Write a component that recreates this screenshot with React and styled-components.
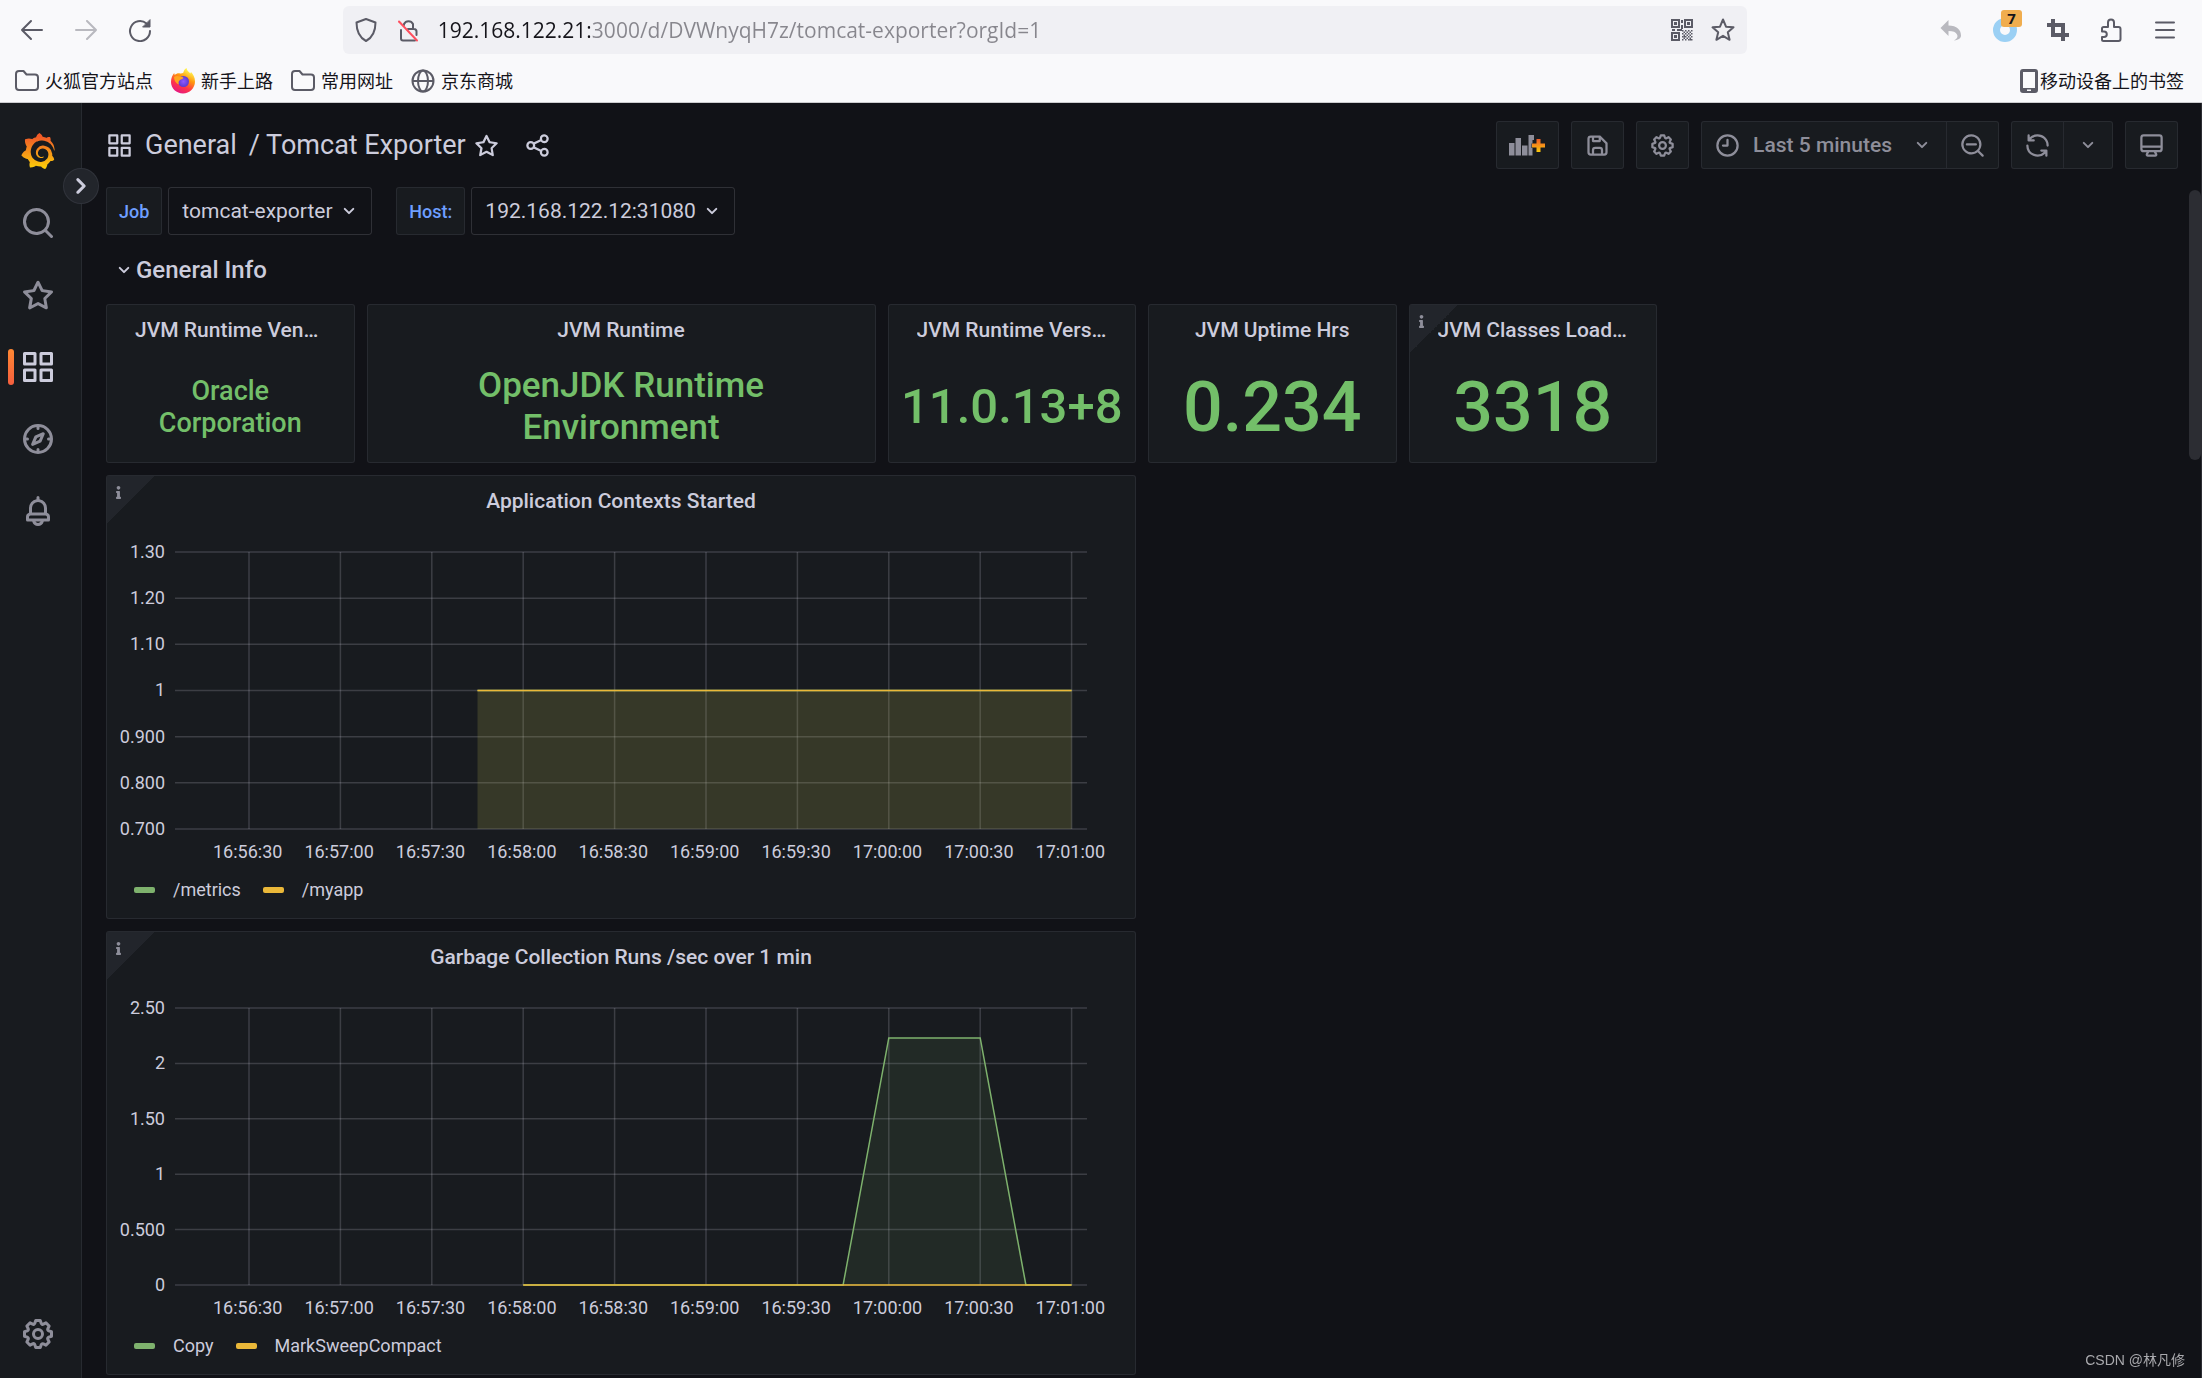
/**
 * Pages - Tomcat Exporter dashboard
 */

// React
import React from 'react'

// UI
import { SiGrafana } from 'react-icons/si'
import { FaInfo } from 'react-icons/fa'

// Style
import styled, { createGlobalStyle, css, ThemeProvider } from 'styled-components'

const theme = {
  COLOUR: {
    axis: 'rgba(204, 204, 220, 0.2)',
    blue: '#6e9fff',
    border: 'rgba(204, 204, 220, 0.09)',
    canvas: '#111217',
    chrome: '#f9f9fb',
    chromeIcon: '#5b5b66',
    green: '#73bf69',
    muted: '#8e8e9a',
    panel: '#181b1f',
    raised: '#22252b',
    seriesGreen: '#7eb26d',
    seriesYellow: '#eab839',
    text: '#ccccdc'
  },
  FONT: {
    app: "Roboto, 'Liberation Sans', sans-serif",
    chrome: "'Open Sans', 'Noto Sans CJK SC', sans-serif"
  }
}

const ICONS = {
  angleDown:
    'M17,9.17a1,1,0,0,0-1.41,0L12,12.71,8.46,9.17a1,1,0,0,0-1.41,0,1,1,0,0,0,0,1.42l4.24,4.24a1,1,0,0,0,1.42,0L17,10.59A1,1,0,0,0,17,9.17Z',
  angleRight:
    'M14.83,11.29,10.59,7.05a1,1,0,0,0-1.42,0,1,1,0,0,0,0,1.41L12.71,12,9.17,15.54a1,1,0,0,0,0,1.41,1,1,0,0,0,.71.29,1,1,0,0,0,.71-.29l4.24-4.24A1,1,0,0,0,14.83,11.29Z',
  apps:
    'M10,13H3a1,1,0,0,0-1,1v7a1,1,0,0,0,1,1h7a1,1,0,0,0,1-1V14A1,1,0,0,0,10,13ZM9,20H4V15H9ZM21,2H14a1,1,0,0,0-1,1v7a1,1,0,0,0,1,1h7a1,1,0,0,0,1-1V3A1,1,0,0,0,21,2ZM20,9H15V4h5Zm1,4H14a1,1,0,0,0-1,1v7a1,1,0,0,0,1,1h7a1,1,0,0,0,1-1V14A1,1,0,0,0,21,13Zm-1,7H15V15h5ZM10,2H3A1,1,0,0,0,2,3v7a1,1,0,0,0,1,1h7a1,1,0,0,0,1-1V3A1,1,0,0,0,10,2ZM9,9H4V4H9Z',
  bell:
    'M18,13.18V10a6,6,0,0,0-5-5.91V3a1,1,0,0,0-2,0V4.09A6,6,0,0,0,6,10v3.18A3,3,0,0,0,4,16v2a1,1,0,0,0,1,1H8.14a4,4,0,0,0,7.72,0H19a1,1,0,0,0,1-1V16A3,3,0,0,0,18,13.18ZM8,10a4,4,0,0,1,8,0v3H8Zm4,10a2,2,0,0,1-1.72-1h3.44A2,2,0,0,1,12,20Zm6-3H6V16a1,1,0,0,1,1-1H17a1,1,0,0,1,1,1Z',
  clock:
    'M12,2A10,10,0,1,0,22,12,10,10,0,0,0,12,2Zm0,18a8,8,0,1,1,8-8A8,8,0,0,1,12,20ZM12,6a1,1,0,0,0-1,1v4H8a1,1,0,0,0,0,2h4a1,1,0,0,0,1-1V7A1,1,0,0,0,12,6Z',
  cog:
    'M21.32,9.55l-1.89-.63.89-1.78A1,1,0,0,0,20.13,6L18,3.87a1,1,0,0,0-1.15-.19l-1.78.89-.63-1.89A1,1,0,0,0,13.5,2h-3a1,1,0,0,0-.95.68L8.92,4.57,7.14,3.68A1,1,0,0,0,6,3.87L3.87,6a1,1,0,0,0-.19,1.15l.89,1.78-1.89.63A1,1,0,0,0,2,10.5v3a1,1,0,0,0,.68.95l1.89.63-.89,1.78A1,1,0,0,0,3.87,18L6,20.13a1,1,0,0,0,1.15.19l1.78-.89.63,1.89a1,1,0,0,0,.95.68h3a1,1,0,0,0,.95-.68l.63-1.89,1.78.89A1,1,0,0,0,18,20.13L20.13,18a1,1,0,0,0,.19-1.15l-.89-1.78,1.89-.63A1,1,0,0,0,22,13.5v-3A1,1,0,0,0,21.32,9.55ZM20,12.78l-1.2.4A2,2,0,0,0,17.64,16l.57,1.14-1.1,1.1L16,17.64a2,2,0,0,0-2.79,1.16l-.4,1.2H11.22l-.4-1.2A2,2,0,0,0,8,17.64l-1.14.57-1.1-1.1L6.36,16A2,2,0,0,0,5.2,13.18L4,12.78V11.22l1.2-.4A2,2,0,0,0,6.36,8L5.79,6.89l1.1-1.1L8,6.36A2,2,0,0,0,10.82,5.2l.4-1.2h1.56l.4,1.2A2,2,0,0,0,16,6.36l1.14-.57,1.1,1.1L17.64,8a2,2,0,0,0,1.16,2.79l1.2.4ZM12,8a4,4,0,1,0,4,4A4,4,0,0,0,12,8Zm0,6a2,2,0,1,1,2-2A2,2,0,0,1,12,14Z',
  compass:
    'M12,2A10,10,0,1,0,22,12,10,10,0,0,0,12,2Zm1,17.93V19a1,1,0,0,0-2,0v.93A8,8,0,0,1,4.07,13H5a1,1,0,0,0,0-2H4.07A8,8,0,0,1,11,4.07V5a1,1,0,0,0,2,0V4.07A8,8,0,0,1,19.93,11H19a1,1,0,0,0,0,2h.93A8,8,0,0,1,13,19.93ZM15.14,7.55l-5,2.12a1,1,0,0,0-.52.52l-2.12,5a1,1,0,0,0,.21,1.1,1,1,0,0,0,.7.3.93.93,0,0,0,.4-.09l5-2.12a1,1,0,0,0,.52-.52l2.12-5a1,1,0,0,0-1.31-1.31Zm-2.49,5.1-2.28,1,1-2.28,2.28-1Z',
  monitor:
    'M19,2H5A3,3,0,0,0,2,5V15a3,3,0,0,0,3,3H7.64l-.58,1a2,2,0,0,0,0,2,2,2,0,0,0,1.75,1h6.46A2,2,0,0,0,17,21a2,2,0,0,0,0-2l-.59-1H19a3,3,0,0,0,3-3V5A3,3,0,0,0,19,2ZM8.77,20,10,18H14l1.2,2ZM20,15a1,1,0,0,1-1,1H5a1,1,0,0,1-1-1V14H20Zm0-3H4V5A1,1,0,0,1,5,4H19a1,1,0,0,1,1,1Z',
  save:
    'M20.71,9.29l-6-6a1,1,0,0,0-.32-.21A1.09,1.09,0,0,0,14,3H6A3,3,0,0,0,3,6V18a3,3,0,0,0,3,3H18a3,3,0,0,0,3-3V10A1,1,0,0,0,20.71,9.29ZM9,5h4V7H9Zm6,14H9V16a1,1,0,0,1,1-1h4a1,1,0,0,1,1,1Zm4-1a1,1,0,0,1-1,1H17V16a3,3,0,0,0-3-3H10a3,3,0,0,0-3,3v3H6a1,1,0,0,1-1-1V6A1,1,0,0,1,6,5H7V8A1,1,0,0,0,8,9h6a1,1,0,0,0,1-1V6.41l4,4Z',
  search:
    'M21.71,20.29,18,16.61A9,9,0,1,0,16.61,18l3.68,3.68a1,1,0,0,0,1.42,0A1,1,0,0,0,21.71,20.29ZM11,18a7,7,0,1,1,7-7A7,7,0,0,1,11,18Z',
  searchMinus:
    'M21.71,20.29,18,16.61A9,9,0,1,0,16.61,18l3.68,3.68a1,1,0,0,0,1.42,0A1,1,0,0,0,21.71,20.29ZM11,18a7,7,0,1,1,7-7A7,7,0,0,1,11,18Zm4-8H7a1,1,0,0,0,0,2h8a1,1,0,0,0,0-2Z',
  share:
    'M18,14a4,4,0,0,0-3.08,1.48l-5.1-2.35a3.64,3.64,0,0,0,0-2.26l5.1-2.35A4,4,0,1,0,14,6a4.17,4.17,0,0,0,.07.71L8.79,9.14a4,4,0,1,0,0,5.72l5.28,2.43A4.17,4.17,0,0,0,14,18a4,4,0,1,0,4-4ZM18,4a2,2,0,1,1-2,2A2,2,0,0,1,18,4ZM6,14a2,2,0,1,1,2-2A2,2,0,0,1,6,14Zm12,6a2,2,0,1,1,2-2A2,2,0,0,1,18,20Z',
  star:
    'M22,9.67A1,1,0,0,0,21.14,9l-5.69-.83L12.9,3a1,1,0,0,0-1.8,0L8.55,8.16,2.86,9a1,1,0,0,0-.81.68,1,1,0,0,0,.25,1l4.13,4-1,5.68A1,1,0,0,0,6.9,21.44L12,18.77l5.1,2.67a.93.93,0,0,0,.46.12,1,1,0,0,0,.59-.19,1,1,0,0,0,.4-1l-1-5.68,4.13-4A1,1,0,0,0,22,9.67Zm-6.15,4a1,1,0,0,0-.29.88l.72,4.2-3.76-2a1.06,1.06,0,0,0-.94,0l-3.76,2,.72-4.2a1,1,0,0,0-.29-.88l-3-3,4.21-.61a1,1,0,0,0,.76-.55L12,5.7l1.88,3.82a1,1,0,0,0,.76.55l4.21.61Z',
  sync:
    'M19.91,15.51H15.38a1,1,0,0,0,0,2h2.4A8,8,0,0,1,4,12a1,1,0,1,0-2,0,10,10,0,0,0,16.88,7.23V21a1,1,0,0,0,2,0V16.5A1,1,0,0,0,19.91,15.51ZM12,2A10,10,0,0,0,5.12,4.77V3a1,1,0,0,0-2,0V7.5a1,1,0,0,0,1,1h4.5a1,1,0,0,0,0-2H6.22A8,8,0,0,1,20,12a1,1,0,0,0,2,0A10,10,0,0,0,12,2Z'
}

const Icon = ({ name, size = 27 }) => (
  <svg width={size} height={size} viewBox='0 0 24 24' fill='currentColor' aria-hidden='true'>
    <path d={ICONS[name]} />
  </svg>
)

// Outline icons of the browser bars, drawn on a 24px grid
const Line = ({ children, size = 24, width = 2 }) => (
  <svg
    width={size}
    height={size}
    viewBox='0 0 24 24'
    fill='none'
    stroke='currentColor'
    strokeWidth={width}
    strokeLinecap='round'
    strokeLinejoin='round'
    aria-hidden='true'
  >
    {children}
  </svg>
)

const FolderIcon = () => (
  <Line>
    <path d='M1 5a3 3 0 0 1 3-3h4.500l3 3.500H20a3 3 0 0 1 3 3V18a3 3 0 0 1-3 3H4a3 3 0 0 1-3-3Z' />
  </Line>
)

const GlobeIcon = () => (
  <Line>
    <circle cx='12' cy='12' r='10.500' />
    <ellipse cx='12' cy='12' rx='5' ry='10.500' />
    <path d='M2 12h20' />
  </Line>
)

const FirefoxIcon = () => (
  <svg width='24' height='26' viewBox='0 0 24 26' aria-hidden='true'>
    <defs>
      <linearGradient id='ff-body' x1='0.8' y1='0' x2='0.3' y2='1'>
        <stop offset='0.1' stopColor='#fff44f' />
        <stop offset='0.4' stopColor='#ff980e' />
        <stop offset='0.7' stopColor='#ff3647' />
        <stop offset='1' stopColor='#e31587' />
      </linearGradient>
      <radialGradient id='ff-core'>
        <stop offset='0' stopColor='#9059ff' />
        <stop offset='1' stopColor='#5b3ad0' />
      </radialGradient>
    </defs>
    <path
      d='M15.500 0c.5 3 2.500 3.800 3.800 5.500l.7-1.500C22 6 24 9.500 24 13.500 24 20 18.500 25.500 12 25.500S0 20.500 0 14c0-4 1.500-7 3.200-9l.5 2C5 5.500 7 5 8.500 5.200 10 6 13 5 12.500 4 12.800 2.500 14 1 15.500 0Z'
      fill='url(#ff-body)'
    />
    <circle cx='12.500' cy='13.500' r='5.500' fill='url(#ff-core)' />
    <path d='M3 9c2-1.500 4-1.200 5.500-.5 2 .2 3.500.5 4 1.500-1 1.500-3 1-4 2.500-1 1-1.200 2.500-.5 4C5 15.500 3 12.500 3 9Z' fill='#ffa51e' />
  </svg>
)

const ShieldIcon = () => (
  <Line>
    <path d='M12 1 21.500 4.500c0 8-2 14.500-9.500 18.500C4.500 19 2.500 12.500 2.500 4.500Z' />
  </Line>
)

const InsecureIcon = () => (
  <Line>
    <path d='M8 7V6a5 5 0 0 1 9 0v4.500M5 12v8.500a2 2 0 0 0 2 2h12M12 11h6a2.500 2.500 0 0 1 2.500 2.500V17' />
    <path d='M3 3.500 21 22.500' stroke='#ff4f5e' />
  </Line>
)

const QR_ROWS = ['1010101', '0101010', '1010101', '0101010', '1110101', '0101010', '1010111']

const QrIcon = () => (
  <svg width='22' height='22' viewBox='0 0 22 22' fill='currentColor' aria-hidden='true'>
    {[[0, 0], [13, 0], [0, 13]].map(([x, y]) => (
      <g key={`${x}-${y}`}>
        <rect x={x + 1} y={y + 1} width='7' height='7' fill='none' stroke='currentColor' strokeWidth='2' />
        <rect x={x + 3} y={y + 3} width='3' height='3' />
      </g>
    ))}
    {QR_ROWS.map((row, y) =>
      [...row].map(
        (bit, x) => bit === '1' && <rect key={`${x}-${y}`} x={11 + x * 1.5} y={11 + y * 1.5} width='1.500' height='1.500' />
      )
    )}
    <path d='M10 1h2v3h-2zM10 6h2v4h-2zM1 10h3v2H1zM6 10h5v2H6z' />
  </svg>
)

const AddPanelIcon = () => (
  <svg width='37' height='21' viewBox='0 0 37 21' aria-hidden='true'>
    <defs>
      <linearGradient id='add-plus' x1='0' y1='0' x2='0' y2='1'>
        <stop offset='0' stopColor='#f05a28' />
        <stop offset='1' stopColor='#fbca0a' />
      </linearGradient>
    </defs>
    <path
      d='M0 8h5.500v12.500H0zM6.500 3h5.500v17.500H6.500zM13 10.500h5.500v10H13zM19.500 0H25v5h-1.500v3.500h-1V13h1V20.500h-4z'
      fill='currentColor'
    />
    <path d='M27.500 4h4v4.500H36v4h-4.500V17h-4v-4.500H23v-4h4.500z' fill='url(#add-plus)' />
  </svg>
)

const GrafanaLogo = () => (
  <>
    <GradientDefs width='0' height='0' aria-hidden='true'>
      <defs>
        <linearGradient id='grafana' x1='0' y1='0' x2='0' y2='1'>
          <stop offset='0.1' stopColor='#f05a28' />
          <stop offset='0.95' stopColor='#fbca0a' />
        </linearGradient>
      </defs>
    </GradientDefs>
    <SiGrafana size={36} fill='url(#grafana)' aria-hidden='true' />
  </>
)

// Data
const NAV = [
  { icon: 'search', label: 'Search' },
  { icon: 'star', label: 'Starred' },
  { icon: 'apps', label: 'Dashboards', active: true },
  { icon: 'compass', label: 'Explore' },
  { icon: 'bell', label: 'Alerting' }
]

const STATS = [
  { title: 'JVM Runtime Vendor', value: 'Oracle Corporation', span: 3, size: 27 },
  { title: 'JVM Runtime', value: 'OpenJDK Runtime Environment', span: 6, size: 35 },
  { title: 'JVM Runtime Version', value: '11.0.13+8', span: 3, size: 49 },
  { title: 'JVM Uptime Hrs', value: '0.234', span: 3, size: 70 },
  { title: 'JVM Classes Loaded', value: '3318', span: 3, size: 70, info: true }
]

const TIMES = [
  '16:56:30',
  '16:57:00',
  '16:57:30',
  '16:58:00',
  '16:58:30',
  '16:59:00',
  '16:59:30',
  '17:00:00',
  '17:00:30',
  '17:01:00'
]

// Series points are [half-minute index, value]
const CHARTS = [
  {
    title: 'Application Contexts Started',
    ticks: ['1.30', '1.20', '1.10', '1', '0.900', '0.800', '0.700'],
    min: 0.7,
    max: 1.3,
    series: [
      { name: '/metrics', colour: 'seriesGreen', points: [[2.5, 1], [9, 1]] },
      { name: '/myapp', colour: 'seriesYellow', points: [[2.5, 1], [9, 1]] }
    ]
  },
  {
    title: 'Garbage Collection Runs /sec over 1 min',
    ticks: ['2.50', '2', '1.50', '1', '0.500', '0'],
    min: 0,
    max: 2.5,
    series: [
      { name: 'Copy', colour: 'seriesGreen', points: [[3, 0], [6.5, 0], [7, 2.23], [8, 2.23], [8.5, 0], [9, 0]] },
      { name: 'MarkSweepCompact', colour: 'seriesYellow', points: [[3, 0], [9, 0]] }
    ]
  }
]

const PLOT = { width: 912, height: 277, start: 74, step: 91.4, stroke: 1.5 }

const Plot = ({ max, min, series, ticks, title }) => {
  const x = i => PLOT.start + i * PLOT.step
  const y = v => PLOT.height - ((v - min) / (max - min)) * PLOT.height

  return (
    <StyledPlot
      viewBox={`0 0 ${PLOT.width} ${PLOT.height}`}
      preserveAspectRatio='none'
      role='img'
      aria-label={title}
    >
      <g stroke={theme.COLOUR.axis} strokeWidth={PLOT.stroke}>
        {ticks.map((tick, i) => {
          const at = (i * PLOT.height) / (ticks.length - 1)
          return <line key={tick} x1='0' x2={PLOT.width} y1={at} y2={at} />
        })}

        {TIMES.map((time, i) => (
          <line key={time} x1={x(i)} x2={x(i)} y1='0' y2={PLOT.height} />
        ))}
      </g>

      {series.map(({ colour, name, points }) => {
        const line = points.map(([i, v]) => `${x(i)},${y(v)}`)
        const base = [`${x(points[points.length - 1][0])},${PLOT.height}`, `${x(points[0][0])},${PLOT.height}`]

        return (
          <g key={name}>
            <polygon points={[...line, ...base].join(' ')} fill={theme.COLOUR[colour]} fillOpacity='0.1' />
            <polyline
              points={line.join(' ')}
              fill='none'
              stroke={theme.COLOUR[colour]}
              strokeWidth={PLOT.stroke}
            />
          </g>
        )
      })}
    </StyledPlot>
  )
}

const InfoCorner = () => (
  <CornerButton type='button' aria-label='Panel description'>
    <FaInfo size={13} />
  </CornerButton>
)

const StatPanel = ({ info, size, span, title, value }) => (
  <Panel $span={span} $rows={3}>
    {info && <InfoCorner />}
    <PanelTitle>{title}</PanelTitle>
    <StatValue $size={size}>{value}</StatValue>
  </Panel>
)

const ChartPanel = ({ chart }) => (
  <Panel $span={12} $rows={8}>
    <InfoCorner />
    <PanelTitle>{chart.title}</PanelTitle>

    <PlotRow>
      <YAxis>
        {chart.ticks.map(tick => (
          <span key={tick}>{tick}</span>
        ))}
      </YAxis>
      <Plot {...chart} />
    </PlotRow>

    <XAxis>
      {TIMES.map(time => (
        <span key={time}>{time}</span>
      ))}
    </XAxis>

    <Legend>
      {chart.series.map(({ colour, name }) => (
        <LegendItem key={name}>
          <Swatch $colour={colour} />
          {name}
        </LegendItem>
      ))}
    </Legend>
  </Panel>
)

const Variable = ({ id, label, value }) => (
  <VariableGroup>
    <VariableLabel htmlFor={id}>{label}</VariableLabel>
    <SelectWrap>
      <StyledSelect id={id} defaultValue={value}>
        <option>{value}</option>
      </StyledSelect>
      <Icon name='angleDown' size={24} />
    </SelectWrap>
  </VariableGroup>
)

const BrowserChrome = () => (
  <Chrome>
    <ChromeBar>
      <NavButtons>
        <ChromeButton type='button' aria-label='Back'>
          <Line>
            <path d='M2 12h20M11 3l-9 9 9 9' />
          </Line>
        </ChromeButton>
        <ChromeButton type='button' aria-label='Forward' $dim>
          <Line>
            <path d='M2 12h20M13 3l9 9-9 9' />
          </Line>
        </ChromeButton>
        <ChromeButton type='button' aria-label='Reload'>
          <Line>
            <path d='M22 13a10 10 0 1 1-3.500-7.500' />
            <path d='M22 2v7h-7Z' fill='currentColor' strokeWidth='1' />
          </Line>
        </ChromeButton>
      </NavButtons>

      <UrlBar>
        <ShieldIcon />
        <InsecureIcon />
        <UrlInput
          aria-label='Address'
          defaultValue='192.168.122.21:3000/d/DVWnyqH7z/tomcat-exporter?orgId=1'
        />
        <QrIcon />
        <Line>
          <path d='M12 1.500 15 8.700l7.500.6-5.700 5 1.800 7.500L12 17.800l-6.600 4 1.800-7.500-5.700-5L9 8.700Z' />
        </Line>
      </UrlBar>

      <Extensions>
        <ChromeButton type='button' aria-label='Undo close tab' $dim>
          <svg width='24' height='24' viewBox='0 0 24 24' fill='currentColor' aria-hidden='true'>
            <path d='M9.500 2v5.500C18 7.500 22 12 22 17.500c0 2.500-2 4.500-7 5 3.500-2 4-4 3-6-1-2.500-4-3.500-8.500-3.500V18L1.500 10Z' />
          </svg>
        </ChromeButton>
        <ChromeButton type='button' aria-label='Downloads'>
          <svg width='24' height='24' viewBox='0 0 24 24' fill='none' aria-hidden='true'>
            <circle cx='12' cy='12' r='8.500' stroke='#9bd0f4' strokeWidth='7' />
          </svg>
          <Badge>7</Badge>
        </ChromeButton>
        <ChromeButton type='button' aria-label='Capture'>
          <svg width='22' height='22' viewBox='0 0 22 22' fill='none' stroke='currentColor' strokeWidth='4' aria-hidden='true'>
            <path d='M6 0v16h16M0 6h16v16' />
          </svg>
        </ChromeButton>
        <ChromeButton type='button' aria-label='Extensions'>
          <Line>
            <path d='M3 10.500a1.500 1.500 0 0 1 1.500-1.500H9V4.500a3 3 0 0 1 6 0V9h4.500A2 2 0 0 1 21.500 11v10a2 2 0 0 1-2 2h-15A1.500 1.500 0 0 1 3 21.500V19h2a2.800 2.800 0 0 0 0-5.600H3Z' />
          </Line>
        </ChromeButton>
        <ChromeButton type='button' aria-label='Menu'>
          <Line>
            <path d='M3 4.500h18M3 12h18M3 19.500h18' />
          </Line>
        </ChromeButton>
      </Extensions>
    </ChromeBar>

    <Bookmarks>
      <Bookmark href='#sites'>
        <FolderIcon />
        火狐官方站点
      </Bookmark>
      <Bookmark href='#start'>
        <FirefoxIcon />
        新手上路
      </Bookmark>
      <Bookmark href='#common'>
        <FolderIcon />
        常用网址
      </Bookmark>
      <Bookmark href='#jd'>
        <GlobeIcon />
        京东商城
      </Bookmark>
      <MobileBookmark href='#mobile'>
        <svg width='18' height='24' viewBox='0 0 18 24' aria-hidden='true'>
          <path
            d='M3 0h12a3 3 0 0 1 3 3v18a3 3 0 0 1-3 3H3a3 3 0 0 1-3-3V3a3 3 0 0 1 3-3Zm0 3v16h12V3ZM7 20.500v1.500h4v-1.500Z'
            fill='currentColor'
            fillRule='evenodd'
          />
        </svg>
        <span>移动设备上的书签</span>
      </MobileBookmark>
    </Bookmarks>
  </Chrome>
)

const Sidebar = () => (
  <SideNav aria-label='Main menu'>
    <SideLink href='#home' aria-label='Grafana'>
      <GrafanaLogo />
    </SideLink>
    {NAV.map(({ active, icon, label }) => (
      <SideLink key={label} href={`#${icon}`} aria-label={label} $active={active}>
        <Icon name={icon} size={36} />
      </SideLink>
    ))}
    <Spacer />
    <SideLink href='#cog' aria-label='Configuration'>
      <Icon name='cog' size={36} />
    </SideLink>
    <ExpandButton type='button' aria-label='Expand menu'>
      <Icon name='angleRight' size={36} />
    </ExpandButton>
  </SideNav>
)

const App = () => (
  <ThemeProvider theme={theme}>
    <GlobalStyle />
    <Page>
      <BrowserChrome />

      <Body>
        <Sidebar />

        <Dashboard>
          <Toolbar>
            <Icon name='apps' />
            <Breadcrumb>
              <a href='#general'>General</a>
              <a href='#dashboard'>/ Tomcat Exporter</a>
            </Breadcrumb>
            <TitleButton type='button' aria-label='Mark as favorite'>
              <Icon name='star' />
            </TitleButton>
            <TitleButton type='button' aria-label='Share dashboard'>
              <Icon name='share' />
            </TitleButton>

            <Actions>
              <ToolButton type='button' aria-label='Add panel'>
                <AddPanelIcon />
              </ToolButton>
              <ToolButton type='button' aria-label='Save dashboard'>
                <Icon name='save' />
              </ToolButton>
              <ToolButton type='button' aria-label='Dashboard settings'>
                <Icon name='cog' />
              </ToolButton>
              <ButtonGroup>
                <ToolButton type='button'>
                  <Icon name='clock' />
                  <TimeText>Last 5 minutes</TimeText>
                  <Icon name='angleDown' size={24} />
                </ToolButton>
                <ToolButton type='button' aria-label='Zoom out time range'>
                  <Icon name='searchMinus' />
                </ToolButton>
              </ButtonGroup>
              <ButtonGroup>
                <ToolButton type='button' aria-label='Refresh'>
                  <Icon name='sync' />
                </ToolButton>
                <ToolButton type='button' aria-label='Refresh interval'>
                  <Icon name='angleDown' size={24} />
                </ToolButton>
              </ButtonGroup>
              <ToolButton type='button' aria-label='Cycle view mode'>
                <Icon name='monitor' />
              </ToolButton>
            </Actions>
          </Toolbar>

          <Variables>
            <Variable id='var-job' label='Job' value='tomcat-exporter' />
            <Variable id='var-host' label='Host:' value='192.168.122.12:31080' />
          </Variables>

          <RowTitle type='button'>
            <Icon name='angleDown' size={24} />
            General Info
          </RowTitle>

          <PanelGrid>
            {STATS.map(stat => (
              <StatPanel key={stat.title} {...stat} />
            ))}
            {CHARTS.map(chart => (
              <ChartPanel key={chart.title} chart={chart} />
            ))}
          </PanelGrid>

          <ScrollThumb />
        </Dashboard>
      </Body>

      <Watermark>CSDN @林凡修</Watermark>
    </Page>
  </ThemeProvider>
)

const GlobalStyle = createGlobalStyle`
  * {
    box-sizing: border-box;
  }

  body {
    background: #111217;
    margin: 0;
    overflow: hidden;
  }

  button, input, select {
    background: none;
    border: 0;
    color: inherit;
    font: inherit;
    margin: 0;
    padding: 0;
  }

  a {
    color: inherit;
    text-decoration: none;
  }

  svg {
    display: block;
    flex-shrink: 0;
  }
`

const Page = styled.div`
  display: flex;
  flex-direction: column;
  height: 100vh;
  overflow: hidden;
`

const Spacer = styled.div`
  flex: 1;
`

const GradientDefs = styled.svg`
  position: absolute;
`

/* Browser bars */

const Chrome = styled.header`
  background: ${({ theme }) => theme.COLOUR.chrome};
  border-bottom: 1px solid #cccccf;
  color: ${({ theme }) => theme.COLOUR.chromeIcon};
  font-family: ${({ theme }) => theme.FONT.chrome};
`

const ChromeBar = styled.div`
  align-items: center;
  display: flex;
  height: 60px;
  padding: 0 25px 0 20px;
`

const NavButtons = styled.div`
  display: flex;
  flex: 3 1 0;
  gap: 30px;
`

const ChromeButton = styled.button`
  opacity: ${({ $dim }) => ($dim ? 0.4 : 1)};
  position: relative;
`

const UrlBar = styled.div`
  align-items: center;
  background: #f0f0f4;
  border-radius: 6px;
  display: flex;
  flex: 0 1 1404px;
  gap: 18px;
  height: 48px;
  padding: 0 12px 0 11px;
`

/* The host is darker than the rest of the address */
const UrlInput = styled.input`
  -webkit-text-fill-color: transparent;
  background: linear-gradient(to right, #15141a 152px, #87868d 152px);
  -webkit-background-clip: text;
  background-clip: text;
  color: #87868d;
  flex: 1;
  font-size: 21px;
  height: 32px;
  min-width: 0;
`

const Extensions = styled.div`
  display: flex;
  flex: 4 1 0;
  gap: 30px;
  justify-content: flex-end;
`

const Badge = styled.span`
  background: #f0ad4e;
  border-radius: 3px;
  color: #15141a;
  font-size: 15px;
  font-weight: 700;
  left: 8px;
  line-height: 17px;
  position: absolute;
  text-align: center;
  top: -8px;
  width: 21px;
`

const Bookmarks = styled.nav`
  align-items: center;
  display: flex;
  gap: 18px;
  height: 42px;
  padding: 0 18px 0 15px;
`

const Bookmark = styled.a`
  align-items: center;
  display: flex;
  font-size: 18px;
  gap: 6px;
  line-height: 24px;
  white-space: nowrap;

  && {
    color: #15141a;
  }

  svg {
    color: ${({ theme }) => theme.COLOUR.chromeIcon};
  }
`

const MobileBookmark = styled(Bookmark)`
  gap: 2px;
  margin-left: auto;
`

/* Side menu */

const Body = styled.div`
  background: ${({ theme }) => theme.COLOUR.canvas};
  color: ${({ theme }) => theme.COLOUR.text};
  display: flex;
  flex: 1;
  font-family: ${({ theme }) => theme.FONT.app};
  min-height: 0;
`

const SideNav = styled.nav`
  background: ${({ theme }) => theme.COLOUR.panel};
  border-right: 1px solid ${({ theme }) => theme.COLOUR.border};
  color: ${({ theme }) => theme.COLOUR.muted};
  display: flex;
  flex: 0 0 82px;
  flex-direction: column;
  padding: 12px 0 8px;
  position: relative;
`

const SideLink = styled.a`
  align-items: center;
  display: flex;
  height: 72px;
  padding-left: 20px;
  position: relative;

  ${({ $active, theme }) =>
    $active &&
    css`
      color: ${theme.COLOUR.text};

      &::before {
        background: linear-gradient(#ff8833, #f55f3e);
        border-radius: 3px;
        content: '';
        height: 36px;
        left: 8px;
        position: absolute;
        width: 6px;
      }
    `}
`

const ExpandButton = styled.button`
  align-items: center;
  background: ${({ theme }) => theme.COLOUR.raised};
  border: 1px solid ${({ theme }) => theme.COLOUR.border};
  border-radius: 50%;
  color: ${({ theme }) => theme.COLOUR.text};
  display: flex;
  height: 36px;
  justify-content: center;
  position: absolute;
  right: -18px;
  top: 65px;
  width: 36px;
  z-index: 1;
`

/* Dashboard */

const Dashboard = styled.main`
  border-right: 1px solid #2c2d33;
  flex: 1;
  min-width: 0;
  overflow: hidden;
  padding: 18px 23px 0 24px;
  position: relative;
`

const Toolbar = styled.div`
  align-items: center;
  display: flex;
  height: 48px;
`

const Breadcrumb = styled.div`
  display: flex;
  font-size: 27px;
  gap: 12px;
  line-height: 36px;
  padding: 0 7px 0 12px;
  white-space: nowrap;
`

const TitleButton = styled.button`
  margin-right: 24px;
`

const Actions = styled.div`
  color: ${({ theme }) => theme.COLOUR.muted};
  display: flex;
  gap: 12px;
  margin-left: auto;
`

const ToolButton = styled.button`
  align-items: center;
  background: ${({ theme }) => theme.COLOUR.panel};
  border: 1px solid ${({ theme }) => theme.COLOUR.border};
  border-radius: 3px;
  display: flex;
  gap: 12px;
  height: 48px;
  padding: 0 12px;
`

const ButtonGroup = styled.div`
  display: flex;

  ${ToolButton}:first-child {
    border-radius: 3px 0 0 3px;
  }

  ${ToolButton}:last-child {
    border-left: 0;
    border-radius: 0 3px 3px 0;
  }
`

const TimeText = styled.span`
  font-size: 21px;
  font-weight: 500;
  padding-right: 6px;
  white-space: nowrap;
`

const Variables = styled.div`
  display: flex;
  gap: 24px;
  margin-top: 18px;
`

const VariableGroup = styled.div`
  display: flex;
  gap: 6px;
`

const VariableLabel = styled.label`
  align-items: center;
  background: ${({ theme }) => theme.COLOUR.panel};
  border: 1px solid ${({ theme }) => theme.COLOUR.border};
  border-radius: 3px;
  color: ${({ theme }) => theme.COLOUR.blue};
  display: flex;
  font-size: 18px;
  font-weight: 500;
  height: 48px;
  padding: 0 12px;
`

const SelectWrap = styled.div`
  position: relative;

  svg {
    pointer-events: none;
    position: absolute;
    right: 11px;
    top: 12px;
  }
`

const StyledSelect = styled.select`
  appearance: none;
  border: 1px solid rgba(204, 204, 220, 0.16);
  border-radius: 3px;
  font-size: 21px;
  height: 48px;
  padding: 0 38px 0 13px;
`

const RowTitle = styled.button`
  align-items: center;
  display: flex;
  font-size: 24px;
  font-weight: 500;
  height: 48px;
  margin: 11px 0 10px;
  padding-left: 6px;
`

const PanelGrid = styled.div`
  display: grid;
  gap: 12px;
  grid-auto-rows: 45px;
  grid-template-columns: repeat(24, minmax(0, 1fr));
`

const Panel = styled.section`
  background: ${({ theme }) => theme.COLOUR.panel};
  border: 1px solid ${({ theme }) => theme.COLOUR.border};
  border-radius: 3px;
  display: flex;
  flex-direction: column;
  grid-column: span ${({ $span }) => $span};
  grid-row: span ${({ $rows }) => $rows};
  position: relative;

  /* Charts take half of the grid, one under the other */
  ${({ $span }) => $span === 12 && 'grid-column: 1 / span 12;'}
`

const CornerButton = styled.button`
  background: linear-gradient(135deg, ${({ theme }) => theme.COLOUR.raised} 50%, transparent 50%);
  color: ${({ theme }) => theme.COLOUR.muted};
  height: 48px;
  left: 0;
  padding: 0 0 16px 5px;
  position: absolute;
  top: 0;
  width: 48px;
`

const PanelTitle = styled.h2`
  font-size: 21px;
  font-weight: 500;
  line-height: 50px;
  margin: 0 28px;
  overflow: hidden;
  text-align: center;
  text-overflow: ellipsis;
  white-space: nowrap;
`

const StatValue = styled.div`
  align-items: center;
  color: ${({ theme }) => theme.COLOUR.green};
  display: flex;
  flex: 1;
  font-size: ${({ $size }) => $size}px;
  font-weight: 500;
  justify-content: center;
  line-height: 1.2;
  margin: 0 auto;
  max-width: 320px;
  min-height: 0;
  padding: 0 12px 3px;
  text-align: center;
`

const PlotRow = styled.div`
  display: grid;
  font-size: 18px;
  gap: 10px;
  grid-template-columns: 58px minmax(0, 1fr);
  line-height: 22px;
  margin-top: 15px;
  padding-right: 48px;
`

const YAxis = styled.div`
  display: flex;
  flex-direction: column;
  height: 299px;
  justify-content: space-between;
  text-align: right;
`

const StyledPlot = styled.svg`
  height: 277px;
  margin: 11px 0;
  overflow: visible;
  width: 100%;
`

const XAxis = styled.div`
  display: grid;
  font-size: 18px;
  grid-template-columns: repeat(10, minmax(0, 1fr));
  line-height: 24px;
  padding: 0 19px 0 95px;
  text-align: center;
`

const Legend = styled.ul`
  display: flex;
  font-size: 18px;
  gap: 22px;
  line-height: 24px;
  list-style: none;
  margin: 14px 0 0;
  padding: 0 27px;
`

const LegendItem = styled.li`
  align-items: center;
  display: flex;
  gap: 18px;
`

const Swatch = styled.span`
  background: ${({ $colour, theme }) => theme.COLOUR[$colour]};
  border-radius: 2px;
  height: 6px;
  width: 21px;
`

const ScrollThumb = styled.div`
  background: #2c2d33;
  border-radius: 6px;
  height: 270px;
  position: absolute;
  right: 0;
  top: 87px;
  width: 12px;
`

const Watermark = styled.div`
  bottom: 8px;
  color: #a9a9ad;
  font-family: 'Liberation Sans', 'Noto Sans CJK SC', sans-serif;
  font-size: 14px;
  line-height: 20px;
  position: fixed;
  right: 17px;
`

export default App
